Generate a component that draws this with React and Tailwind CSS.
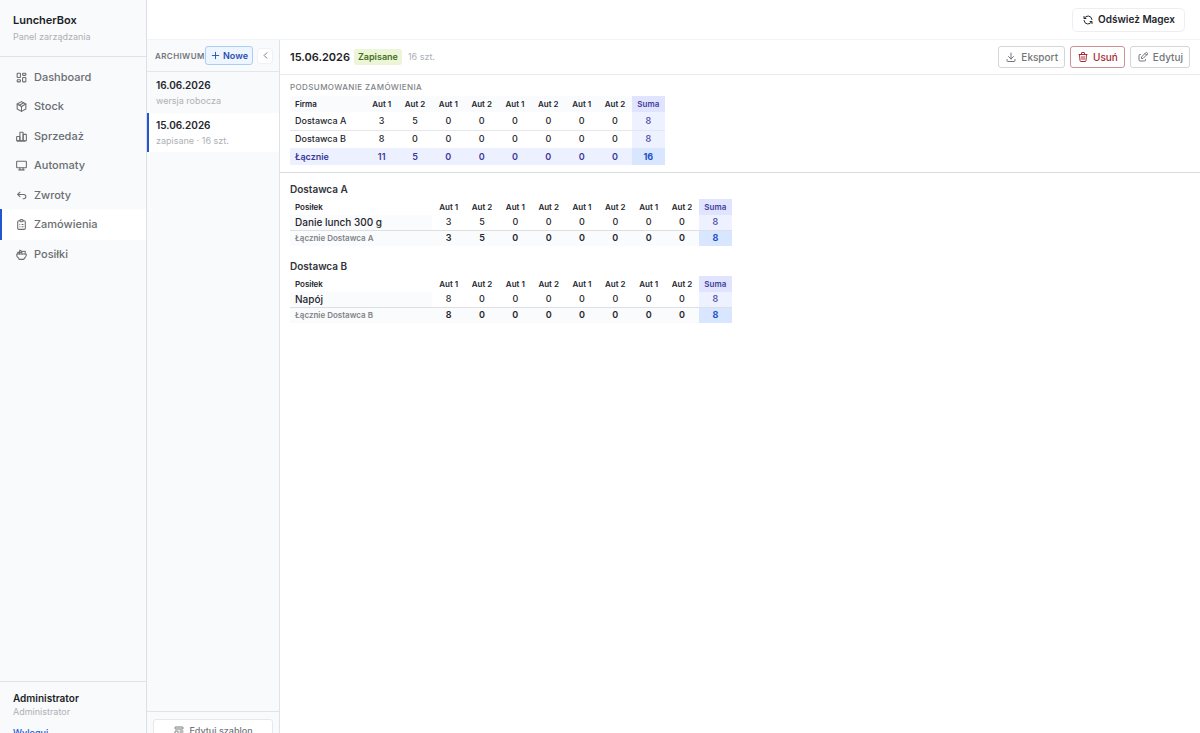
import {
  TbArrowBackUp,
  TbChartBar,
  TbChevronLeft,
  TbClipboardList,
  TbDeviceDesktop,
  TbDownload,
  TbEdit,
  TbLayoutDashboard,
  TbPackage,
  TbPlus,
  TbRefresh,
  TbSalad,
  TbTemplate,
  TbTrash,
} from 'react-icons/tb';

const navItems = [
  { label: 'Dashboard', icon: TbLayoutDashboard },
  { label: 'Stock', icon: TbPackage },
  { label: 'Sprzedaż', icon: TbChartBar },
  { label: 'Automaty', icon: TbDeviceDesktop },
  { label: 'Zwroty', icon: TbArrowBackUp },
  { label: 'Zamówienia', icon: TbClipboardList, active: true },
  { label: 'Posiłki', icon: TbSalad },
];

const archive = [
  { date: '16.06.2026', note: 'wersja robocza' },
  { date: '15.06.2026', note: 'zapisane · 16 szt.', active: true },
];

const summaryRows = [
  { name: 'Dostawca A', values: [3, 5, 0, 0, 0, 0, 0, 0] },
  { name: 'Dostawca B', values: [8, 0, 0, 0, 0, 0, 0, 0] },
];

const suppliers = [
  { name: 'Dostawca A', meals: [{ name: 'Danie lunch 300 g', values: [3, 5, 0, 0, 0, 0, 0, 0] }] },
  { name: 'Dostawca B', meals: [{ name: 'Napój', values: [8, 0, 0, 0, 0, 0, 0, 0] }] },
];

const sum = (values) => values.reduce((a, b) => a + b, 0);
const columnTotals = (rows) => rows[0].values.map((_, i) => sum(rows.map((row) => row.values[i])));

const Sidebar = () => (
  <aside className="w-[147px] shrink-0 flex flex-col bg-[#f8fafc] border-r border-[#dcdfe3]">
    <div className="h-[57px] shrink-0 pl-[13px] pt-3 border-b border-[#dfe3e7]">
      <h1 className="text-[11px] leading-4 font-semibold text-[#1c1e26]">LuncherBox</h1>
      <p className="mt-0.5 text-[9px] leading-[14px] text-[#adb1b5]">Panel zarządzania</p>
    </div>
    <nav className="flex-1 flex flex-col pt-[5px]">
      {navItems.map(({ label, icon: Icon, active }) => (
        <a
          key={label}
          href="#"
          className={`flex items-center gap-1.5 h-[30px] -mb-px last:mb-0 even:h-[31px] border-l-2 pl-[13px] text-[11px] font-medium text-[#6b6e73] ${
            active ? 'bg-white border-[#2356d0]' : 'border-transparent'
          }`}
        >
          <Icon size={13} />
          {label}
        </a>
      ))}
    </nav>
    <div className="h-[52px] shrink-0 pl-[13px] pt-[9px] border-t border-[#dfe3e7] overflow-hidden">
      <p className="text-[10px] leading-[14px] font-semibold text-[#1c1e26]">Administrator</p>
      <p className="text-[9px] leading-[14px] text-[#adb1b5]">Administrator</p>
      <a href="#" className="block mt-2 text-[9px] leading-3 font-medium text-[#2356d0]">
        Wyloguj
      </a>
    </div>
  </aside>
);

const Archive = () => (
  <section className="w-[133px] shrink-0 flex flex-col bg-[#f8fafc] border-r border-[#dfe3e7]">
    <div className="h-8 shrink-0 flex items-center pl-2 pr-1.5 border-b border-[#e3e6ea]">
      <h2 className="w-[50px] text-[8px] font-semibold tracking-wider text-[#73767b]">ARCHIWUM</h2>
      <button className="w-12 h-[19px] shrink-0 flex items-center justify-center gap-0.5 rounded-[3px] border border-[#adcdf8] bg-[#edf5ff] text-[9px] font-semibold text-[#2c4db0]">
        <TbPlus size={11} />
        Nowe
      </button>
      <button
        aria-label="Zwiń archiwum"
        className="ml-1 w-4 h-4 shrink-0 flex items-center justify-center rounded-[3px] border border-[#eff1f3] bg-white text-[#6b6e73]"
      >
        <TbChevronLeft size={11} />
      </button>
    </div>
    <div className="flex-1">
      {archive.map((item) => (
        <button
          key={item.date}
          className={`block w-full h-[41px] pt-px pl-[7px] text-left border-l-2 even:h-[39px] ${
            item.active ? 'bg-white border-[#2356d0]' : 'border-transparent'
          }`}
        >
          <span className="block text-[10px] leading-[15px] font-semibold text-[#24262d]">{item.date}</span>
          <span className="block text-[9px] leading-[15px] text-[#adb1b5]">{item.note}</span>
        </button>
      ))}
    </div>
    <div className="h-[22px] shrink-0 px-1.5 pt-[7px] border-t border-[#e0e3e7] overflow-hidden">
      <button className="w-full h-6 flex items-center justify-center gap-1 rounded-[3px] border border-[#e6e8eb] bg-white text-[9px] font-medium text-[#73767b]">
        <TbTemplate size={12} />
        Edytuj szablon
      </button>
    </div>
  </section>
);

const HeaderRow = ({ label, count }) => (
  <tr className="h-4 text-[8px] font-semibold text-[#24262d]">
    <th scope="col" className="pl-[5px] text-left font-semibold">
      {label}
    </th>
    {Array.from({ length: count }, (_, i) => (
      <th key={i} scope="col" className="font-semibold">
        Aut {(i % 2) + 1}
      </th>
    ))}
    <th scope="col" className="bg-[#e0e4ff] font-semibold text-[#45409c]">
      Suma
    </th>
  </tr>
);

const Columns = ({ first, count }) => (
  <colgroup>
    <col className={first} />
    {Array.from({ length: count + 1 }, (_, i) => (
      <col key={i} />
    ))}
  </colgroup>
);

const SummaryTable = () => {
  const totals = columnTotals(summaryRows);

  return (
    <table className="mt-[3px] w-[375px] table-fixed border-collapse text-center text-[9px] leading-3 text-[#24262d]">
      <Columns first="w-[75px]" count={totals.length} />
      <thead className="bg-[#fafbfd]">
        <HeaderRow label="Firma" count={totals.length} />
      </thead>
      <tbody>
        {summaryRows.map((row) => (
          <tr key={row.name} className="h-[18px] border-b border-[#e6e7ea] last:border-0">
            <th scope="row" className="pl-[5px] text-left font-medium">
              {row.name}
            </th>
            {row.values.map((value, i) => (
              <td key={i} className="font-medium">
                {value}
              </td>
            ))}
            <td className="bg-[#eef1ff] font-medium text-[#45409c]">{sum(row.values)}</td>
          </tr>
        ))}
      </tbody>
      <tfoot>
        <tr className="h-[17px] bg-[#edf0fe] text-[#3c389c]">
          <th scope="row" className="pl-[5px] text-left font-semibold">
            Łącznie
          </th>
          {totals.map((value, i) => (
            <td key={i} className="font-semibold">
              {value}
            </td>
          ))}
          <td className="bg-[#d8e7ff] font-bold text-[#2350c8]">{sum(totals)}</td>
        </tr>
      </tfoot>
    </table>
  );
};

const SupplierTable = ({ supplier }) => {
  const totals = columnTotals(supplier.meals);

  return (
    <section>
      <h3 className="text-[10px] leading-[14px] font-semibold text-[#33363c]">{supplier.name}</h3>
      <table className="mt-[3px] w-[442px] table-fixed border-collapse text-center text-[9px] leading-3 text-[#24262d]">
        <Columns first="w-[142px]" count={totals.length} />
        <thead>
          <HeaderRow label="Posiłek" count={totals.length} />
        </thead>
        <tbody>
          {supplier.meals.map((meal) => (
            <tr key={meal.name} className="h-[15px]">
              <th scope="row" className="pl-[5px] bg-[#f9fbfc] text-left text-[10px] font-medium">
                {meal.name}
              </th>
              {meal.values.map((value, i) => (
                <td key={i} className="font-medium">
                  {value}
                </td>
              ))}
              <td className="bg-[#eef1ff] font-medium text-[#45409c]">{sum(meal.values)}</td>
            </tr>
          ))}
        </tbody>
        <tfoot>
          <tr className="h-4 border-t border-[#dddfe2] bg-[#f9fbfc]">
            <th scope="row" className="pl-[5px] text-left text-[8px] font-semibold text-[#808387]">
              Łącznie {supplier.name}
            </th>
            {totals.map((value, i) => (
              <td key={i} className="font-semibold">
                {value}
              </td>
            ))}
            <td className="bg-[#d8e7ff] font-bold text-[#2350c8]">{sum(totals)}</td>
          </tr>
        </tfoot>
      </table>
    </section>
  );
};

const OrderDetails = () => (
  <main className="flex-1 min-w-0">
    <div className="h-[35px] flex items-center px-2.5 border-b border-[#e9ebee]">
      <h2 className="text-[11px] font-semibold text-[#1c1e26]">15.06.2026</h2>
      <span className="ml-1 h-4 flex items-center px-1 rounded-[3px] bg-[#edf5d8] text-[9px] font-semibold text-[#45701c]">
        Zapisane
      </span>
      <span className="ml-1.5 text-[9px] text-[#adb1b5]">16 szt.</span>
      <div className="ml-auto flex gap-[5px]">
        <button className="h-[22px] flex items-center gap-1 px-1.5 rounded-[3px] border border-[#d3d5d8] bg-white text-[10px] font-medium text-[#73767b]">
          <TbDownload size={12} />
          Eksport
        </button>
        <button className="h-[22px] flex items-center gap-1 px-1.5 rounded-[3px] border border-[#cf8f94] bg-white text-[10px] font-medium text-[#a62b33]">
          <TbTrash size={12} />
          Usuń
        </button>
        <button className="h-[22px] flex items-center gap-1 px-1.5 rounded-[3px] border border-[#d3d5d8] bg-white text-[10px] font-medium text-[#73767b]">
          <TbEdit size={12} />
          Edytuj
        </button>
      </div>
    </div>
    <div className="px-2.5 pt-1.5 pb-[7px] border-b border-[#d8dadd]">
      <h3 className="text-[8px] leading-3 font-medium tracking-wider text-[#808387]">PODSUMOWANIE ZAMÓWIENIA</h3>
      <SummaryTable />
    </div>
    <div className="flex flex-col gap-[13px] px-2.5 pt-[9px]">
      {suppliers.map((supplier) => (
        <SupplierTable key={supplier.name} supplier={supplier} />
      ))}
    </div>
  </main>
);

const App = () => {
  return (
    <div className="h-screen flex overflow-hidden bg-white font-[Inter,sans-serif]">
      <Sidebar />
      <div className="flex-1 min-w-0 flex flex-col">
        <header className="h-10 shrink-0 flex items-center justify-end pr-[15px] border-b border-[#f3f4f6]">
          <button className="h-6 flex items-center gap-1 px-[9px] rounded-[5px] border border-[#eceef1] bg-white text-[10px] font-semibold text-[#24262d]">
            <TbRefresh size={12} />
            Odśwież Magex
          </button>
        </header>
        <div className="flex-1 min-h-0 flex">
          <Archive />
          <OrderDetails />
        </div>
      </div>
    </div>
  );
};

export default App;
